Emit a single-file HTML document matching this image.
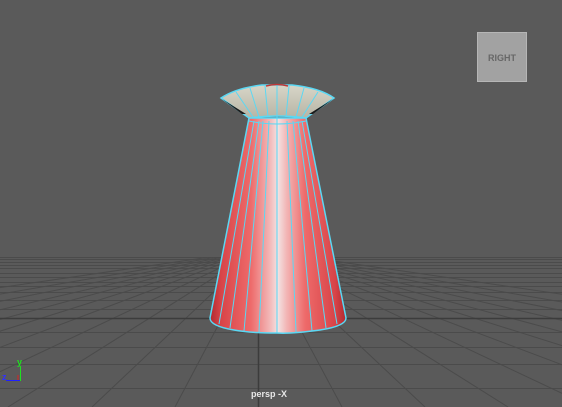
<!DOCTYPE html>
<html><head><style>
html,body{margin:0;padding:0;background:#5a5a5a;}
svg{display:block}
</style></head><body>
<svg width="562" height="407" viewBox="0 0 562 407" xmlns="http://www.w3.org/2000/svg">
<defs>
<linearGradient id="cone" x1="210" y1="0" x2="346" y2="0" gradientUnits="userSpaceOnUse">
<stop offset="0" stop-color="#b02a30"/>
<stop offset="0.08" stop-color="#d84448"/>
<stop offset="0.3" stop-color="#ee6a6a"/>
<stop offset="0.44" stop-color="#f2b8b8"/>
<stop offset="0.5" stop-color="#f3e2e2"/>
<stop offset="0.56" stop-color="#f2b8b8"/>
<stop offset="0.7" stop-color="#ee6a6a"/>
<stop offset="0.92" stop-color="#d84448"/>
<stop offset="1" stop-color="#b02a30"/>
</linearGradient>
<linearGradient id="cup" x1="0" y1="85" x2="0" y2="117" gradientUnits="userSpaceOnUse">
<stop offset="0" stop-color="#d8d6c8"/>
<stop offset="1" stop-color="#b8b6a6"/>
</linearGradient>
<clipPath id="floor"><rect x="0" y="257" width="562" height="150"/></clipPath>
</defs>
<rect width="562" height="407" fill="#5a5a5a"/>
<g stroke="#4b4b4b" stroke-width="1" fill="none">
<line x1="0" y1="257.5" x2="562" y2="257.5"/>
<line x1="0" y1="259.5" x2="562" y2="259.5"/>
<line x1="0" y1="262.5" x2="562" y2="262.5"/>
<line x1="0" y1="265.5" x2="562" y2="265.5"/>
<line x1="0" y1="268.5" x2="562" y2="268.5"/>
<line x1="0" y1="273.5" x2="562" y2="273.5"/>
<line x1="0" y1="277.5" x2="562" y2="277.5"/>
<line x1="0" y1="282.5" x2="562" y2="282.5"/>
<line x1="0" y1="286.5" x2="562" y2="286.5"/>
<line x1="0" y1="292.5" x2="562" y2="292.5"/>
<line x1="0" y1="300.5" x2="562" y2="300.5"/>
<line x1="0" y1="309.5" x2="562" y2="309.5"/>
<line x1="0" y1="332.5" x2="562" y2="332.5"/>
<line x1="0" y1="347.5" x2="562" y2="347.5"/>
<line x1="0" y1="364.5" x2="562" y2="364.5"/>
<line x1="0" y1="388.5" x2="562" y2="388.5"/>
<g clip-path="url(#floor)">
<line x1="258" y1="250" x2="8" y2="407"/>
<line x1="258" y1="250" x2="92" y2="407"/>
<line x1="258" y1="250" x2="175" y2="407"/>
<line x1="258" y1="250" x2="342" y2="407"/>
<line x1="258" y1="250" x2="425" y2="407"/>
<line x1="258" y1="250" x2="508" y2="407"/>
<line x1="258" y1="250" x2="-75" y2="407"/>
<line x1="258" y1="250" x2="-158" y2="407"/>
<line x1="258" y1="250" x2="-241" y2="407"/>
<line x1="258" y1="250" x2="-325" y2="407"/>
<line x1="258" y1="250" x2="-420" y2="407"/>
<line x1="258" y1="250" x2="-530" y2="407"/>
<line x1="258" y1="250" x2="-660" y2="407"/>
<line x1="258" y1="250" x2="-820" y2="407"/>
<line x1="258" y1="250" x2="591" y2="407"/>
<line x1="258" y1="250" x2="674" y2="407"/>
<line x1="258" y1="250" x2="757" y2="407"/>
<line x1="258" y1="250" x2="841" y2="407"/>
<line x1="258" y1="250" x2="936" y2="407"/>
<line x1="258" y1="250" x2="1046" y2="407"/>
<line x1="258" y1="250" x2="1176" y2="407"/>
<line x1="258" y1="250" x2="1336" y2="407"/>
</g>
</g>
<line x1="0" y1="318.5" x2="562" y2="318.5" stroke="#3c3c3c" stroke-width="1.5"/>
<line x1="258.5" y1="257" x2="258.5" y2="407" stroke="#3c3c3c" stroke-width="1.5"/>

<!-- cone body -->
<path d="M249,118 L306,118 L346,318 Q346,326 320,330 Q290,334 277,333 Q250,333 234,330 Q210,326 210,318 Z" fill="url(#cone)" stroke="#5ad8f4" stroke-width="1.5"/>
<g stroke="#5ad8f4" stroke-width="1" fill="none">
<line x1="254" y1="121" x2="219" y2="324"/>
<line x1="259" y1="121" x2="230" y2="328"/>
<line x1="263" y1="121" x2="244" y2="331"/>
<line x1="269" y1="121" x2="259" y2="332"/>
<line x1="277" y1="118" x2="277" y2="333"/>
<line x1="287" y1="121" x2="296" y2="332"/>
<line x1="293" y1="121" x2="312" y2="331"/>
<line x1="298" y1="121" x2="326" y2="328"/>
<line x1="302" y1="121" x2="337" y2="324"/>
<path d="M249,121 Q277,127 306,121"/>
</g>

<!-- cup -->
<path d="M221,98 Q236,88 262,85 L292,85 Q320,88 334,98 L306,118 Q277,114 249,118 Z" fill="url(#cup)" stroke="#5ad8f4" stroke-width="1.5"/>
<path d="M222,99 L246,114 L242,114 Z" fill="#1a1a1a"/>
<path d="M333,99 L309,114 L313,114 Z" fill="#1a1a1a"/>
<g stroke="#5ad8f4" stroke-width="1" fill="none">
<line x1="277" y1="85" x2="277" y2="118"/>
<line x1="265" y1="86" x2="268" y2="117"/>
<line x1="289" y1="86" x2="286" y2="117"/>
<line x1="250" y1="88" x2="259" y2="117"/>
<line x1="304" y1="88" x2="296" y2="117"/>
<line x1="236" y1="92" x2="253" y2="117"/>
<line x1="318" y1="92" x2="302" y2="117"/>
</g>
<path d="M266,86 Q277,83 288,86" stroke="#c03838" stroke-width="1.5" fill="none"/>

<!-- view cube -->
<rect x="477.5" y="32.5" width="49" height="49" fill="#a2a2a2" stroke="#b6b6b6"/>
<text x="502" y="61" text-anchor="middle" font-family="Liberation Sans, sans-serif" font-size="9" font-weight="bold" fill="#676767">RIGHT</text>

<!-- axis -->
<line x1="6" y1="380.5" x2="20" y2="380.5" stroke="#2020ff" stroke-width="1"/>
<line x1="20.5" y1="366" x2="20.5" y2="381" stroke="#20e020" stroke-width="1"/>
<line x1="18" y1="375" x2="18" y2="380" stroke="#e02020" stroke-width="1"/>
<text x="17" y="365" font-family="Liberation Sans, sans-serif" font-size="9" font-weight="bold" fill="#20e020">y</text>
<text x="2" y="380" font-family="Liberation Sans, sans-serif" font-size="9" font-weight="bold" fill="#3030ff">z</text>

<text x="269" y="397" text-anchor="middle" font-family="Liberation Sans, sans-serif" font-size="9" font-weight="bold" fill="#e8e8e8">persp -X</text>
</svg>
</body></html>
